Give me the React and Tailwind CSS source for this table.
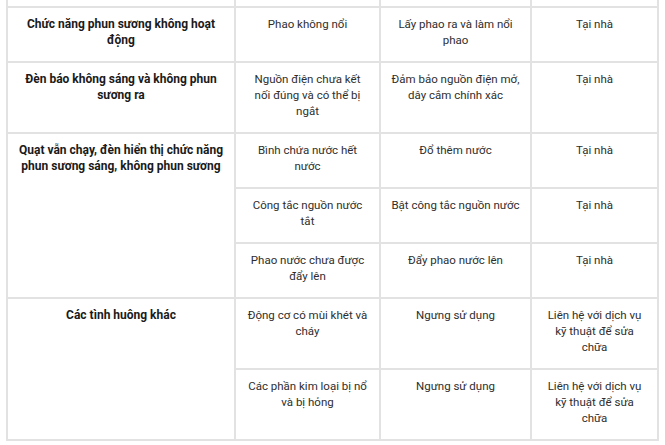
const rows = [
  {
    issue: ['Chức năng phun sương không hoạt', 'động'],
    items: [{ cause: ['Phao không nổi'], fix: ['Lấy phao ra và làm nổi', 'phao'], where: ['Tại nhà'] }],
  },
  {
    issue: ['Đèn báo không sáng và không phun', 'sương ra'],
    items: [
      {
        cause: ['Nguồn điện chưa kết', 'nối đúng và có thể bị', 'ngắt'],
        fix: ['Đảm bảo nguồn điện mở,', 'dây cắm chính xác'],
        where: ['Tại nhà'],
      },
    ],
  },
  {
    issue: ['Quạt vẫn chạy, đèn hiển thị chức năng', 'phun sương sáng, không phun sương'],
    items: [
      { cause: ['Bình chứa nước hết', 'nước'], fix: ['Đổ thêm nước'], where: ['Tại nhà'] },
      { cause: ['Công tắc nguồn nước', 'tắt'], fix: ['Bật công tắc nguồn nước'], where: ['Tại nhà'] },
      { cause: ['Phao nước chưa được', 'đẩy lên'], fix: ['Đẩy phao nước lên'], where: ['Tại nhà'] },
    ],
  },
  {
    issue: ['Các tình huông khác'],
    items: [
      {
        cause: ['Động cơ có mùi khét và', 'cháy'],
        fix: ['Ngưng sử dụng'],
        where: ['Liên hệ với dịch vụ', 'kỹ thuật để sửa', 'chữa'],
      },
      {
        cause: ['Các phần kim loại bị nổ', 'và bị hỏng'],
        fix: ['Ngưng sử dụng'],
        where: ['Liên hệ với dịch vụ', 'kỹ thuật để sửa', 'chữa'],
      },
    ],
  },
];

const cell = 'border-2 border-[#e2e2e2] align-top text-center pt-[8px] pb-[13px] px-[2px] whitespace-nowrap';

const Lines = ({ lines }) => lines.map((l) => <div key={l}>{l}</div>);

export default function App() {
  return (
    <div className="w-[665px] h-[445px] bg-white overflow-hidden pl-[6px] font-['Roboto',sans-serif] text-[11.5px] leading-[16px] text-[#2e2e2e]">
      <table className="border-collapse table-fixed w-[651px] -mt-[2px]">
        <colgroup>
          <col className="w-[228px]" />
          <col className="w-[145px]" />
          <col className="w-[151px]" />
          <col className="w-[127px]" />
        </colgroup>
        <tbody>
          {/* tail of the previous row, cut off at the top */}
          <tr className="h-[9px]">
            <td className="border-2 border-t-0 border-[#e2e2e2]"></td>
            <td className="border-2 border-t-0 border-[#e2e2e2]"></td>
            <td className="border-2 border-t-0 border-[#e2e2e2]"></td>
            <td className="border-2 border-t-0 border-[#e2e2e2]"></td>
          </tr>
          {rows.map((row) =>
            row.items.map((item, i) => (
              <tr key={row.issue[0] + i}>
                {i === 0 && (
                  <td rowSpan={row.items.length} className={`${cell} text-[12px] font-bold text-[#1a1a1a]`}>
                    <Lines lines={row.issue} />
                  </td>
                )}
                <td className={cell}><Lines lines={item.cause} /></td>
                <td className={cell}><Lines lines={item.fix} /></td>
                <td className={cell}><Lines lines={item.where} /></td>
              </tr>
            ))
          )}
        </tbody>
      </table>
    </div>
  );
}
